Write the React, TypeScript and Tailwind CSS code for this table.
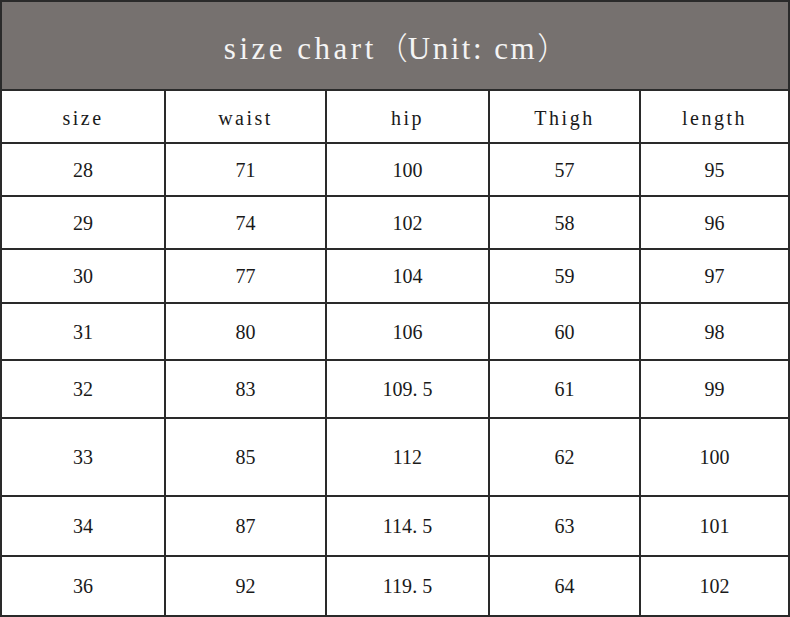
const headers = ["size", "waist", "hip", "Thigh", "length"];

const rows = [
  { h: "h-[53px]", cells: ["28", "71", "100", "57", "95"] },
  { h: "h-[53px]", cells: ["29", "74", "102", "58", "96"] },
  { h: "h-[54px]", cells: ["30", "77", "104", "59", "97"] },
  { h: "h-[57px]", cells: ["31", "80", "106", "60", "98"] },
  { h: "h-[58px]", cells: ["32", "83", "109.5", "61", "99"] },
  { h: "h-[78px]", cells: ["33", "85", "112", "62", "100"] },
  { h: "h-[60px]", cells: ["34", "87", "114.5", "63", "101"] },
  { h: "h-[58px]", cells: ["36", "92", "119.5", "64", "102"] },
];

const cols = "grid grid-cols-[164px_161px_163px_151px_147px]";

// SimSun-like look: the period takes a full half-width cell
function Num({ value }: { value: string }) {
  const [a, b] = value.split(".");
  if (b === undefined) return <span>{value}</span>;
  return (
    <span>
      {a}
      <span className="inline-block w-[10px]">.</span>
      {b}
    </span>
  );
}

export default function App() {
  return (
    <div className="w-[790px] h-[617px] border-2 border-[#2a2a2a] bg-white flex flex-col">
      {/* title band */}
      <div className="h-[89px] shrink-0 bg-[#76716f] border-b-2 border-[#2a2a2a] flex items-center justify-center pt-[5px]">
        <span className="text-[31px] text-[#f4f4f4] font-['Liberation_Serif','Noto_Sans_CJK_SC',serif] pl-[2px] whitespace-nowrap">
          <span className="tracking-[3.5px]">size chart</span>
          <span className="font-['Noto_Sans_CJK_SC',sans-serif] font-light">（</span>
          <span className="tracking-[2.5px]">Unit: cm</span>
          <span className="font-['Noto_Sans_CJK_SC',sans-serif] font-light">）</span>
        </span>
      </div>

      {/* header row */}
      <div className={`${cols} h-[53px] shrink-0 border-b-2 border-[#2a2a2a]`}>
        {headers.map((t, i) => (
          <div
            key={t}
            className={`flex items-center justify-center pt-[3px] text-[20px] tracking-[2.5px] text-[#1a1a1a] font-['Liberation_Serif',serif] ${
              i < 4 ? "border-r-2 border-[#2a2a2a]" : ""
            }`}
          >
            {t}
          </div>
        ))}
      </div>

      {rows.map((r, ri) => (
        <div
          key={ri}
          className={`${cols} ${r.h} shrink-0 ${ri < rows.length - 1 ? "border-b-2 border-[#2a2a2a]" : ""}`}
        >
          {r.cells.map((c, i) => (
            <div
              key={i}
              className={`flex items-center justify-center text-[20px] text-[#1a1a1a] font-['Liberation_Serif',serif] ${
                i < 4 ? "border-r-2 border-[#2a2a2a]" : ""
              }`}
            >
              <Num value={c} />
            </div>
          ))}
        </div>
      ))}
    </div>
  );
}
